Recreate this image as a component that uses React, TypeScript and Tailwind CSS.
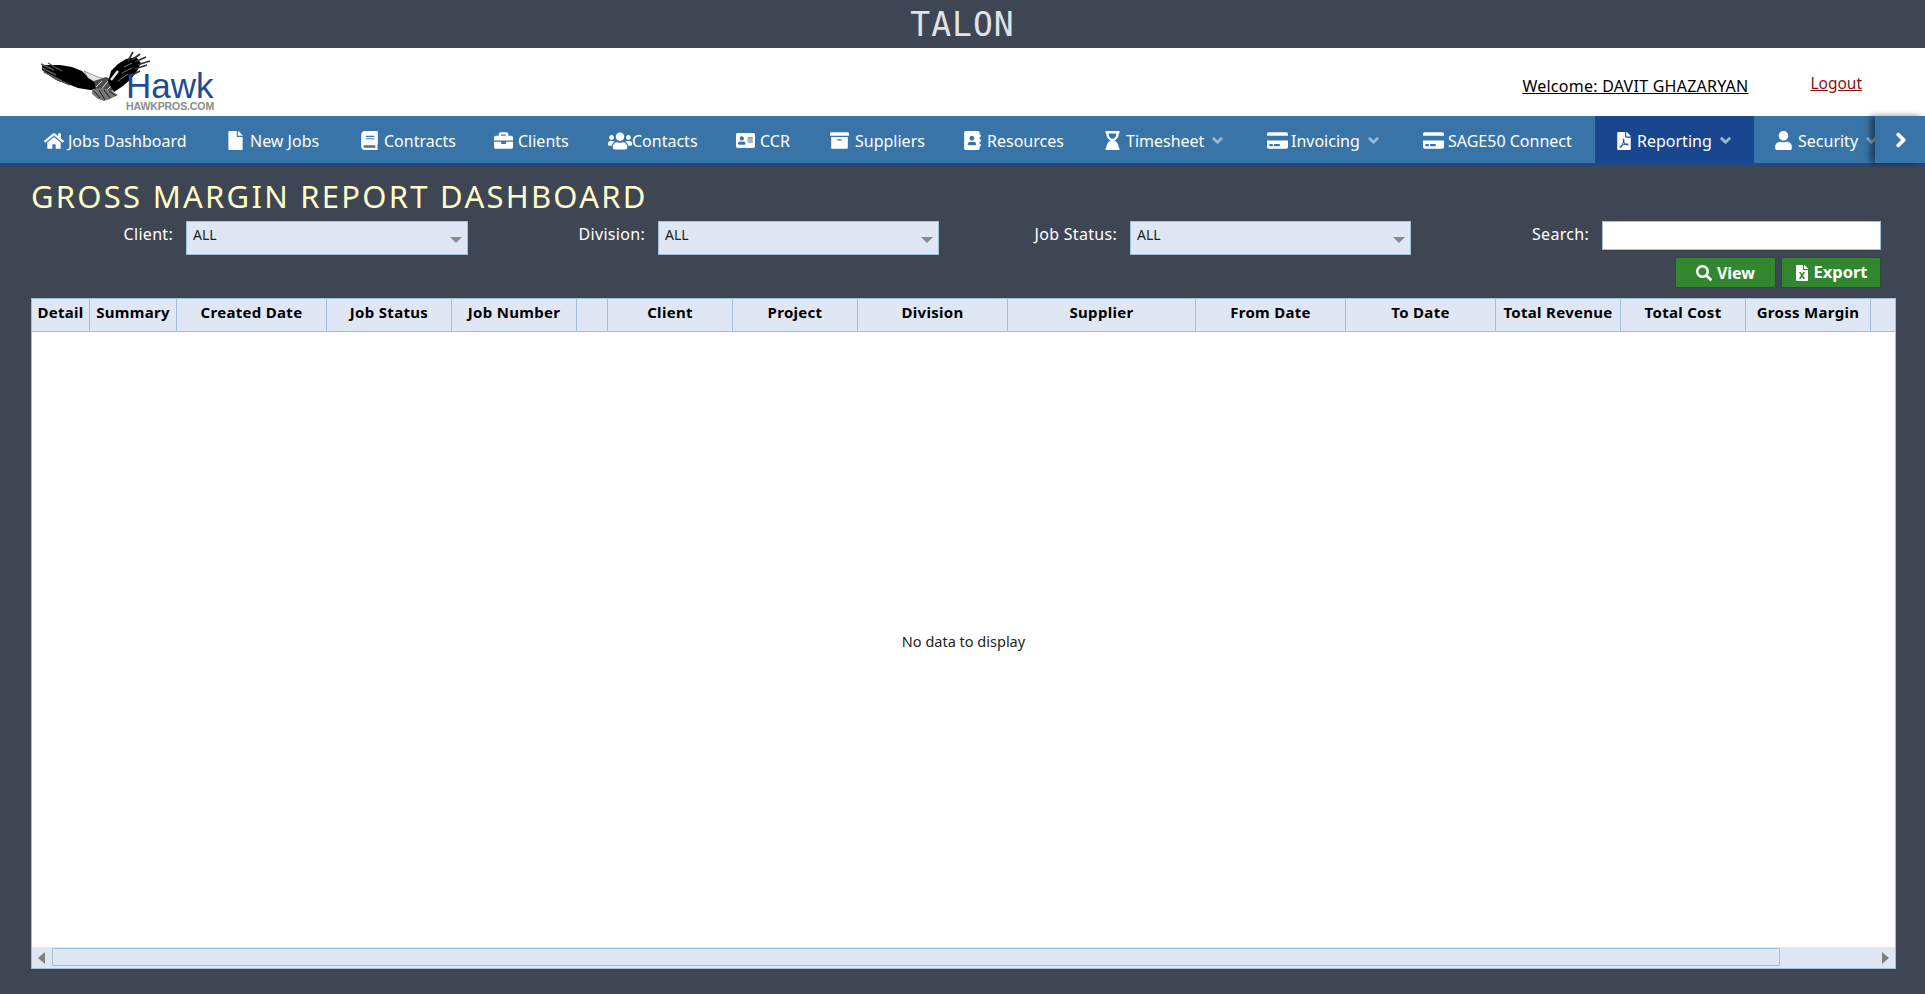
import React from "react";
import {
  FaHome, FaFile, FaBook, FaBriefcase, FaUsers, FaAddressCard, FaArchive, FaAddressBook,
  FaHourglassEnd, FaCreditCard, FaFilePdf, FaUser, FaChevronRight, FaChevronDown, FaSearch, FaFileExcel,
} from "react-icons/fa";

const navItems = [
  { label: "Jobs Dashboard", Icon: FaHome, size: 20, w: "w-[184px]", iw: "w-[24px]", caret: false, active: false },
  { label: "New Jobs", Icon: FaFile, size: 19, w: "w-[133px]", iw: "w-[24px] -ml-[2px]", caret: false, active: false },
  { label: "Contracts", Icon: FaBook, size: 19, w: "w-[133px]", iw: "w-[24px] -ml-[1px]", caret: false, active: false },
  { label: "Clients", Icon: FaBriefcase, size: 19, w: "w-[114px]", iw: "w-[24px]", caret: false, active: false },
  { label: "Contacts", Icon: FaUsers, size: 24, w: "w-[128px]", iw: "w-[24px]", caret: false, active: false },
  { label: "CCR", Icon: FaAddressCard, size: 19, w: "w-[94px]", iw: "w-[24px]", caret: false, active: false },
  { label: "Suppliers", Icon: FaArchive, size: 19, w: "w-[133px]", iw: "w-[25px]", caret: false, active: false },
  { label: "Resources", Icon: FaAddressBook, size: 19, w: "w-[141px]", iw: "w-[24px]", caret: false, active: false },
  { label: "Timesheet", Icon: FaHourglassEnd, size: 19, w: "w-[163px]", iw: "w-[23px] -ml-[1px]", caret: true, active: false },
  { label: "Invoicing", Icon: FaCreditCard, size: 21, w: "w-[156px]", iw: "w-[24px]", caret: true, active: false },
  { label: "SAGE50 Connect", Icon: FaCreditCard, size: 21, w: "w-[192px]", iw: "w-[25px]", caret: false, active: false },
  { label: "Reporting", Icon: FaFilePdf, size: 18, w: "w-[159px]", iw: "w-[22px]", caret: true, active: true },
  { label: "Security", Icon: FaUser, size: 19, w: "w-[130px]", iw: "w-[24px]", caret: true, active: false },
];

const columns = [
  { label: "Detail", w: "w-[58px]" },
  { label: "Summary", w: "w-[87px]" },
  { label: "Created Date", w: "w-[150px]" },
  { label: "Job Status", w: "w-[125px]" },
  { label: "Job Number", w: "w-[125px]" },
  { label: "", w: "w-[31px]" },
  { label: "Client", w: "w-[125px]" },
  { label: "Project", w: "w-[125px]" },
  { label: "Division", w: "w-[150px]" },
  { label: "Supplier", w: "w-[188px]" },
  { label: "From Date", w: "w-[150px]" },
  { label: "To Date", w: "w-[150px]" },
  { label: "Total Revenue", w: "w-[125px]" },
  { label: "Total Cost", w: "w-[125px]" },
  { label: "Gross Margin", w: "w-[125px]" },
];

function Logo() {
  return (
    <div className="flex items-start w-[176px] h-[62px]">
      <svg width="88" height="62" viewBox="0 0 88 62" className="block shrink-0 overflow-visible">
        {/* left wing */}
        <path d="M2 14 L10 14 L20 14 L32 16 L42 20 L48 26 L57 30 L58 39 L50 39 L38 37 L28 33 L18 30 L10 25 L2 19 Z" fill="#000" />
        <path d="M1 13 L14 19 M2 17 L16 24 M4 21 L22 30 M8 12 L22 20 M14 27 L30 34" stroke="#5a5a5a" strokeWidth="1.4" fill="none" />
        <path d="M44 20 L58 26 L66 28 L58 33 L48 27 Z" fill="#e2e2e2" stroke="#444" strokeWidth="0.5" />
        {/* body */}
        <path d="M54 30 L66 26 L76 30 L76 38 L64 43 L56 39 Z" fill="#4d4d4d" />
        <path d="M56 36 L62 30 M60 40 L68 30 M66 40 L74 32" stroke="#ddd" strokeWidth="1" fill="none" />
        {/* tail */}
        <path d="M52 38 L62 37 L72 40 L78 44 L70 48 L64 50 L58 48 L52 43 Z" fill="#777" />
        <path d="M54 40 L60 47 M59 39 L65 49 M64 39 L70 47 M69 40 L76 45" stroke="#1a1a1a" strokeWidth="1" fill="none" />
        {/* right wing */}
        <path d="M68 31 L71 20 L78 13 L86 8 L96 6 L101 12 L97 20 L91 28 L83 35 L74 41 Z" fill="#000" />
        <path d="M78 20 L71 29" stroke="#e8e8e8" strokeWidth="2.4" fill="none" />
        <path d="M88 10 L93 1 M92 9 L100 3 M95 11 L106 6 M97 14 L110 10 M95 18 L107 14 M90 25 L100 20" stroke="#333" strokeWidth="1.8" fill="none" />
        <path d="M84 16 L92 12 M82 22 L92 17 M78 30 L88 23" stroke="#888" strokeWidth="0.9" fill="none" />
      </svg>
      <div className="pt-[21px] -ml-[2px] flex flex-col font-['Liberation_Sans',sans-serif]">
        <span className="h-[28px] text-[35px] leading-[28px] text-[#1d4c91] whitespace-nowrap">Hawk</span>
        <span className="h-[12px] text-[10.5px] leading-[12px] font-bold tracking-[-0.1px] text-[#8b8b8b] whitespace-nowrap">HAWKPROS.COM</span>
      </div>
    </div>
  );
}

function SelectBox({ w }: { w: string }) {
  return (
    <div className={`${w} h-[34px] bg-[#dfe7f5] border border-[#9fc0d8] relative pl-[6px] pt-[3px] text-[14px] leading-[20px] text-[#222]`}>
      ALL
      <span className="absolute right-[5px] top-[15px] w-0 h-0 border-l-[6px] border-r-[6px] border-t-[6px] border-l-transparent border-r-transparent border-t-[#8a8a8a]" />
    </div>
  );
}

export default function App() {
  return (
    <div className="w-[1925px] h-[994px] overflow-hidden flex flex-col bg-[#3f4653] font-['Noto_Sans','Liberation_Sans',sans-serif] text-[14px]">
      <div className="h-[48px] shrink-0 flex items-center justify-center">
        <span className="font-['DejaVu_Sans_Mono','Liberation_Mono',monospace] text-[33px] leading-none tracking-[1px] text-[#dfe2e7]">TALON</span>
      </div>

      <div className="h-[68px] shrink-0 bg-white flex items-start">
        <div className="ml-[40px] mt-[3px]"><Logo /></div>
        <div className="ml-auto mt-[27px] mr-[63px] flex items-start">
          <span className="underline text-[16px] leading-[22px] text-black w-[227px] whitespace-nowrap tracking-[0.25px]">Welcome: DAVIT GHAZARYAN</span>
          <span className="underline text-[15.5px] leading-[20px] text-[#8b1010] ml-[61px] -mt-[2px]">Logout</span>
        </div>
      </div>

      <div className="h-[49px] shrink-0 bg-[#3974a8] border-b-2 border-[#1c4a8c] flex">
        <div className="flex-1 flex overflow-hidden pl-[24px] min-w-0">
          {navItems.map((n) => (
            <div key={n.label} className={`${n.w} shrink-0 flex items-center pl-[20px] pt-[2px] text-white text-[16px] ${n.active ? "bg-[#18468f]" : ""}`}>
              <span className={`${n.iw} shrink-0 flex items-center`}><n.Icon size={n.size} /></span>
              <span className="whitespace-nowrap">{n.label}</span>
              {n.caret && <FaChevronDown size={11} stroke="currentColor" strokeWidth={50} className="ml-[8px] text-[#9db8d2] shrink-0" />}
            </div>
          ))}
        </div>
        <div className="w-[50px] shrink-0 bg-[#3974a8] flex items-center pl-[18px] text-white shadow-[-5px_0_6px_rgba(0,0,0,0.45)] relative">
          <FaChevronRight size={16} stroke="currentColor" strokeWidth={40} />
        </div>
      </div>

      <div className="flex-1 flex flex-col px-[31px] pb-[25px] min-h-0">
        <h1 className="mt-[11px] text-[31px] leading-[40px] tracking-[2.25px] text-[#fdfdc9] whitespace-nowrap">GROSS MARGIN REPORT DASHBOARD</h1>
        <div className="flex items-start mt-[5px] text-white text-[16px] tracking-[0.3px]">
          <div className="w-[142px] text-right leading-[26px]">Client:</div>
          <div className="ml-[13px] tracking-normal"><SelectBox w="w-[282px]" /></div>
          <div className="w-[177px] text-right leading-[26px]">Division:</div>
          <div className="ml-[13px] tracking-normal"><SelectBox w="w-[281px]" /></div>
          <div className="w-[178px] text-right leading-[26px]">Job Status:</div>
          <div className="ml-[13px] tracking-normal"><SelectBox w="w-[281px]" /></div>
          <div className="w-[178px] text-right leading-[26px]">Search:</div>
          <div className="ml-[13px] w-[279px] h-[29px] bg-white border border-[#9fc0d8]" />
        </div>
        <div className="flex justify-end gap-[5px] pr-[13px] mt-[2px] h-[31px] shrink-0">
          <div className="w-[101px] h-[31px] bg-[#32862f] border border-[#28502a] rounded-[2px] flex items-center justify-center gap-[5px] text-white font-bold text-[16px]">
            <FaSearch size={16} />View
          </div>
          <div className="w-[100px] h-[31px] bg-[#32862f] border border-[#28502a] rounded-[2px] flex items-center justify-center gap-[3px] text-white font-bold text-[16.5px]">
            <FaFileExcel size={16} />Export
          </div>
        </div>

        <div className="mt-[10px] w-[1865px] flex-1 min-h-0 bg-white border border-[#9fc0d8] flex flex-col">
          <div className="h-[33px] shrink-0 flex bg-[#dfe7f5] border-b border-[#9fc0d8]">
            {columns.map((c, i) => (
              <div key={i} className={`${c.w} shrink-0 border-r border-[#9fc0d8] flex items-center justify-center pb-[6px] font-bold text-[15px] tracking-[0.3px] text-black whitespace-nowrap`}>{c.label}</div>
            ))}
            <div className="flex-1" />
          </div>
          <div className="flex-1 min-h-0 flex items-center justify-center pt-[5px] text-[14.5px] text-[#222]">No data to display</div>
          <div className="h-[21px] shrink-0 bg-[#dfe7f5] flex items-center relative">
            <span className="ml-[6px] w-0 h-0 border-t-[6px] border-b-[6px] border-r-[7px] border-t-transparent border-b-transparent border-r-[#808080]" />
            <div className="ml-[7px] w-[1728px] h-[18px] border border-[#9fc0d8] rounded-[1px] mb-[1px]" />
            <span className="ml-auto mr-[6px] w-0 h-0 border-t-[6px] border-b-[6px] border-l-[7px] border-t-transparent border-b-transparent border-l-[#808080]" />
          </div>
        </div>
      </div>
    </div>
  );
}
